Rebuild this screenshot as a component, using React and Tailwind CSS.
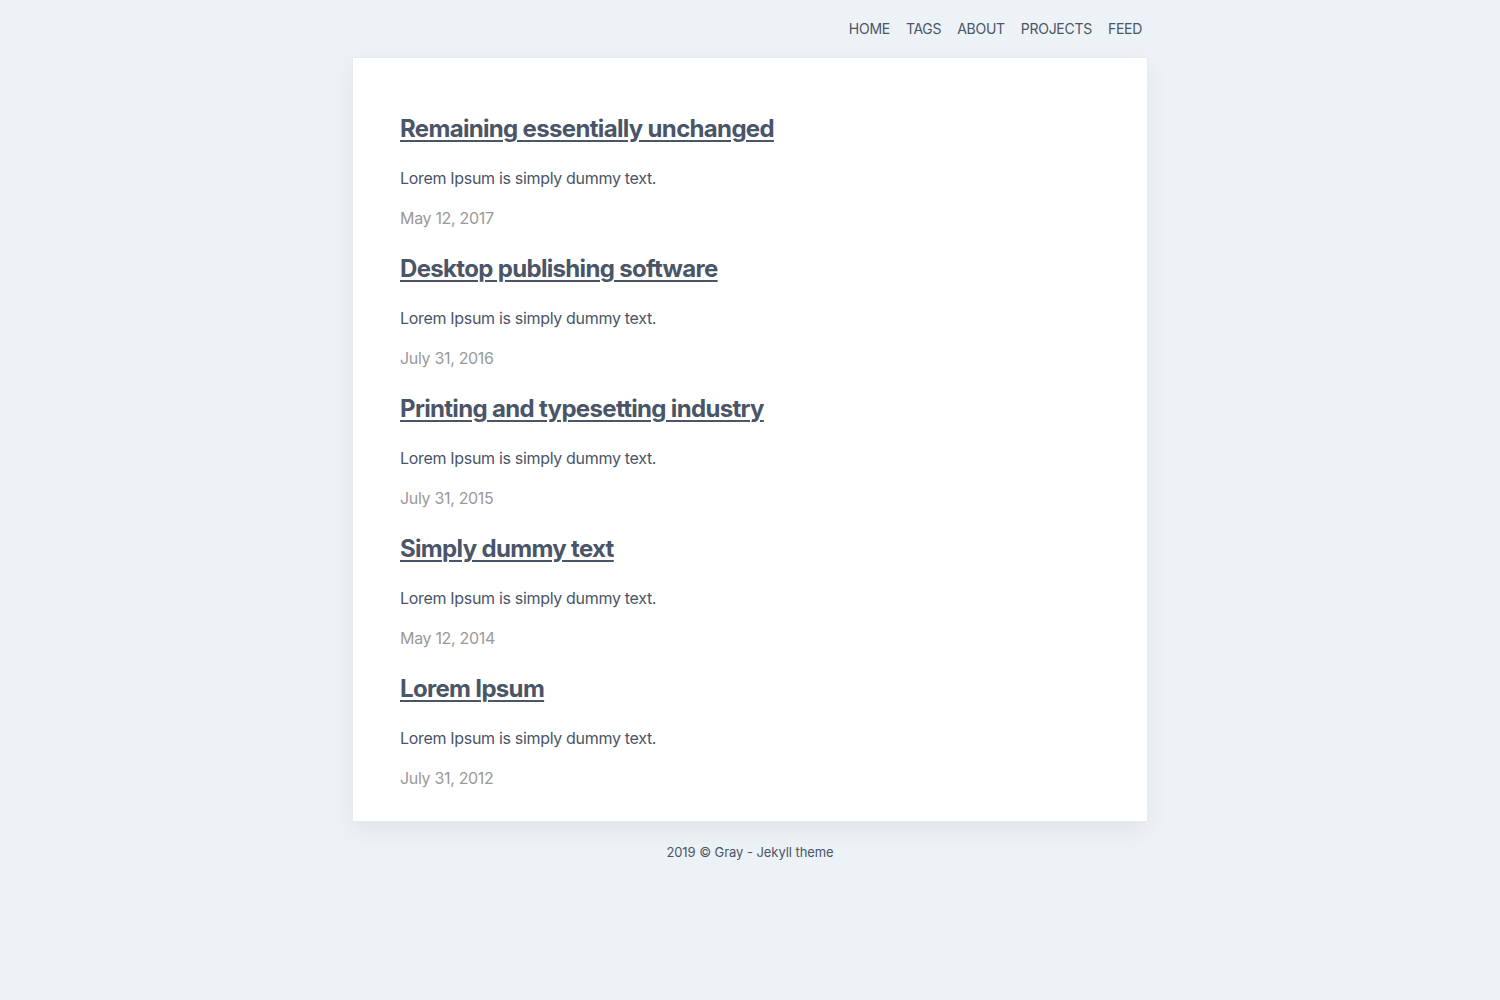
const posts = [
  { title: "Remaining essentially unchanged", date: "May 12, 2017" },
  { title: "Desktop publishing software", date: "July 31, 2016" },
  { title: "Printing and typesetting industry", date: "July 31, 2015" },
  { title: "Simply dummy text", date: "May 12, 2014" },
  { title: "Lorem Ipsum", date: "July 31, 2012" },
];

const nav = ["HOME", "TAGS", "ABOUT", "PROJECTS", "FEED"];

export default function App() {
  return (
    <div
      className="min-h-screen bg-[#edf2f7] text-[#4a5568]"
      style={{ fontFamily: "Inter, 'Noto Sans', sans-serif" }}
    >
      <div className="w-[796px] mx-auto">
        {/* Header */}
        <header className="flex justify-end h-[57px] items-center pr-[6px]">
          <nav className="flex gap-4 text-sm tracking-[-0.02em]">
            {nav.map((item) => (
              <a key={item} href="#" className="text-[#4a5568]">
                {item}
              </a>
            ))}
          </nav>
        </header>

        {/* Card */}
        <main className="bg-white border border-[#e6ebf0] shadow-[0_8px_24px_rgba(0,0,0,0.06)] px-[47px] pt-8 pb-[31px]">
          {posts.map((post) => (
            <article key={post.title}>
              <h2 className="mt-[23px] mb-[21px] text-2xl leading-8 font-bold tracking-[-0.028em]">
                <a href="#" className="underline underline-offset-[3px] decoration-2">
                  {post.title}
                </a>
              </h2>
              <p className="text-base leading-6 tracking-[-0.02em]">
                Lorem Ipsum is simply dummy text.
              </p>
              <p className="mt-4 text-base leading-6 tracking-[-0.02em] text-[#999]">
                {post.date}
              </p>
            </article>
          ))}
        </main>

        {/* Footer */}
        <footer className="py-5 text-center text-[13px] leading-5 tracking-[-0.005em]">
          2019 © Gray - Jekyll theme
        </footer>
      </div>
    </div>
  );
}
